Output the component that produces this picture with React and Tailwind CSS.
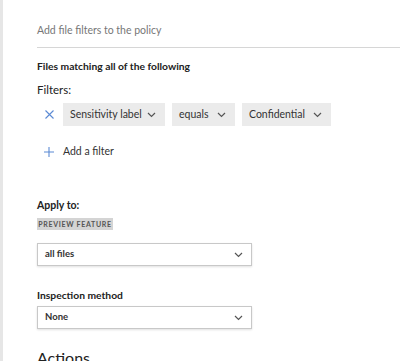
import React from 'react';

const Chevron = ({ className = '' }) => (
  <svg width="9" height="6" viewBox="0 0 9 6" className={`shrink-0 ${className}`}>
    <path d="M1 1l3.5 3.5L8 1" fill="none" stroke="currentColor" strokeWidth="1.2" />
  </svg>
);

const FilterBox = ({ label, width }) => (
  <div className={`h-[23px] bg-[#ebebeb] flex items-center justify-between pl-[7px] pr-[9px] whitespace-nowrap ${width}`}>
    <span className="text-[10.5px] text-[#333]">{label}</span>
    <Chevron className="text-[#555]" />
  </div>
);

const Select = ({ value }) => (
  <div className="w-[215px] h-[23px] border border-[#c8c8c8] shadow-[0_1px_2px_rgba(0,0,0,0.12)] flex items-center justify-between pl-[7px] pr-[8px] bg-white">
    <span className="text-[9.5px] font-bold text-[#333]">{value}</span>
    <Chevron className="text-[#555]" />
  </div>
);

export default function App() {
  return (
    <div className="w-[400px] h-[361px] overflow-hidden bg-white flex" style={{ fontFamily: 'Lato, "Liberation Sans", sans-serif' }}>
      <div className="w-[3px] bg-[#e6e6e6] shrink-0"></div>
      <div className="flex-1 pl-[34px] pt-[21px] whitespace-nowrap">
        <div className="text-[10.5px] text-[#777] leading-[18px]">Add file filters to the policy</div>
        <div className="mt-[8px] h-px bg-[#d6d6d6]"></div>

        <div className="mt-[10px] text-[10.3px] font-bold text-[#222] leading-[16px]">Files matching all of the following</div>
        <div className="mt-[7px] text-[11.5px] text-[#222] leading-[18px]">Filters:</div>

        <div className="mt-[4px] flex items-center">
          <div className="w-[26px] flex items-center pl-[8px] text-[#5b8ad4]">
            <svg width="9" height="9" viewBox="0 0 9 9">
              <path d="M0.5 0.5l8 8M8.5 0.5l-8 8" stroke="currentColor" strokeWidth="1.1" />
            </svg>
          </div>
          <div className="flex gap-[7px]">
            <FilterBox label="Sensitivity label" width="w-[102px]" />
            <FilterBox label="equals" width="w-[63px]" />
            <FilterBox label="Confidential" width="w-[89px]" />
          </div>
        </div>

        <div className="mt-[17px] h-[18px] flex items-center">
          <div className="w-[26px] pl-[7px] text-[#5b8ad4]">
            <svg width="10" height="10" viewBox="0 0 10 10">
              <path d="M5 0v10M0 5h10" stroke="currentColor" strokeWidth="1.1" />
            </svg>
          </div>
          <span className="text-[10.5px] text-[#333]">Add a filter</span>
        </div>

        <div className="mt-[35px] text-[10.5px] font-bold text-[#222] leading-[18px]">Apply to:</div>
        <div className="mt-[4px] flex items-center justify-center w-[76px] h-[12px] bg-[#d4d4d4] text-[7px] font-bold tracking-[0.1em] text-[#555]">PREVIEW FEATURE</div>

        <div className="mt-[13px]">
          <Select value="all files" />
        </div>

        <div className="mt-[21px] text-[10.3px] font-bold text-[#222] leading-[16px]">Inspection method</div>
        <div className="mt-[3px]">
          <Select value="None" />
        </div>

        <div className="mt-[18px] text-[16px] text-[#222] leading-[22px]">Actions</div>
      </div>
    </div>
  );
}
